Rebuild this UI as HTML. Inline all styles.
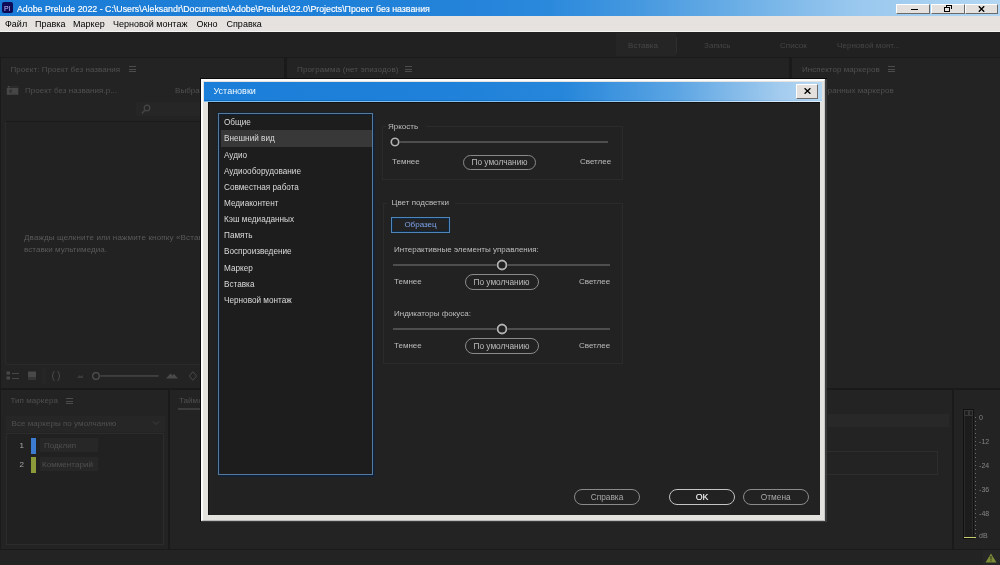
<!DOCTYPE html>
<html><head><meta charset="utf-8">
<style>
*{margin:0;padding:0;box-sizing:border-box}
html,body{width:1000px;height:565px;overflow:hidden;background:#1a1a1a;font-family:"Liberation Sans",sans-serif}
.a{position:absolute}
.t{position:absolute;white-space:nowrap;line-height:1}
#root{position:absolute;left:0;top:0;width:1000px;height:565px;will-change:transform}
#title{left:0;top:0;width:1000px;height:16px;background:linear-gradient(90deg,#1b7dd7 0%,#1e7fd8 30%,#2383d9 45%,#2b89dc 55%,#4a9be0 65%,#70b1e7 75%,#98c7ee 85%,#b3d7f3 100%)}
#menu{left:0;top:16px;width:1000px;height:16px;background:#e5e2df;border-bottom:1.5px solid #f4f4f2}
#menu .t{top:4px;font-size:9px;color:#000}
.wb{position:absolute;top:4px;height:10px;background:#e4e0dd;border-right:1px solid #6a6a6a;border-bottom:1px solid #6a6a6a;border-top:1px solid #fff;border-left:1px solid #fff}
.pn{position:absolute;background:#232323}
.dim{position:absolute;white-space:nowrap;line-height:1;color:#505050;font-size:8px;letter-spacing:0.05px}
.li{position:absolute;left:224px;white-space:nowrap;line-height:1;color:#dadada;font-size:8.2px}
.dt{position:absolute;white-space:nowrap;line-height:1;color:#bdbdbd;font-size:8px}
.pill{position:absolute;border:1.3px solid #8a8a8a;border-radius:8px;height:15.5px}
.pill span{position:absolute;left:0;right:0;top:2.8px;text-align:center;white-space:nowrap;line-height:1;color:#bcbcbc;font-size:8.3px}
.sl{position:absolute;height:1.8px;background:#4e4e4e}
.knob{position:absolute;width:9.4px;height:9.4px;border:2px solid #b2b2b2;border-radius:50%;background:#222;box-shadow:0 0 0 1px #141414}
.gb{position:absolute;border:1px solid #2b2b2b}
.ham{position:absolute;width:7px;height:6px;border-top:1px solid #4c4c4c;border-bottom:1px solid #4c4c4c}
.ham:after{content:"";position:absolute;left:0;right:0;top:1.5px;height:1px;background:#4c4c4c}
</style></head><body><div id="root">
<!-- title bar -->
<div id="title" class="a">
  <div class="a" style="left:2px;top:2px;width:11px;height:11px;background:#0e0a56;border-radius:2px"></div>
  <div class="t" style="left:4px;top:4.5px;font-size:7px;color:#c4bcff">Pl</div>
  <div class="t" style="left:17px;top:4.5px;font-size:8.8px;color:#fff;-webkit-text-stroke:0.15px #fff">Adobe Prelude 2022 - C:\Users\Aleksandr\Documents\Adobe\Prelude\22.0\Projects\Проект без названия</div>
  <div class="wb" style="left:896px;width:34px"></div>
  <div class="wb" style="left:931px;width:34px"></div>
  <div class="wb" style="left:965px;width:33px"></div>
  <div class="a" style="left:911px;top:8.5px;width:7px;height:1.6px;background:#000"></div>
  <svg class="a" style="left:943px;top:3px" width="10" height="10" viewBox="0 0 10 10" shape-rendering="crispEdges"><path d="M3 1.5h5.5v1.5h-5.5zM7.5 3h1v3h-1zM3 3h1v0.5h-1z" fill="#000"/><rect x="1" y="3.5" width="5" height="4.5" fill="#e4e0dd"/><path d="M1 3.5h5.5v1.5h-5.5zM1 5h1v3.5h-1zM5.5 5h1v3.5h-1zM1 7.5h5.5v1h-5.5z" fill="#000"/></svg>
  <svg class="a" style="left:977.5px;top:5.5px" width="7" height="6" viewBox="0 0 7 6"><path d="M0.8 0.3L6.2 5.7M6.2 0.3L0.8 5.7" stroke="#000" stroke-width="1.4"/></svg>
</div>
<div id="menu" class="a">
  <div class="t" style="left:5px">Файл</div>
  <div class="t" style="left:35px">Правка</div>
  <div class="t" style="left:73px">Маркер</div>
  <div class="t" style="left:113px">Черновой монтаж</div>
  <div class="t" style="left:196.5px">Окно</div>
  <div class="t" style="left:226.5px">Справка</div>
</div>
<!-- workspace bar -->
<div class="pn" style="left:0;top:32px;width:1000px;height:25px;background:#212121"></div>
<div class="a" style="left:616px;top:33px;width:60px;height:23px;background:#252525"></div>
<div class="dim" style="left:628px;top:42px;color:#464646">Вставка</div>
<div class="a" style="left:676px;top:37px;width:1px;height:16px;background:#2e2e2e"></div>
<div class="dim" style="left:704px;top:42px;color:#464646">Запись</div>
<div class="dim" style="left:780px;top:42px;color:#464646">Список</div>
<div class="dim" style="left:837px;top:42px;color:#464646">Черновой монт...</div>

<!-- panels -->
<div class="pn" style="left:1px;top:58px;width:283px;height:330px"></div>
<div class="pn" style="left:287px;top:58px;width:502px;height:330px"></div>
<div class="pn" style="left:792px;top:58px;width:208px;height:330px"></div>
<div class="pn" style="left:1px;top:390px;width:166.5px;height:159px"></div>
<div class="pn" style="left:170px;top:390px;width:782px;height:159px"></div>
<div class="pn" style="left:953.5px;top:390px;width:46.5px;height:159px"></div>
<div class="pn" style="left:0;top:550px;width:1000px;height:15px;background:#232323"></div>

<!-- left top panel content -->
<div class="dim" style="left:10.5px;top:66px">Проект: Проект без названия</div>
<div class="ham" style="left:129px;top:66px"></div>
<svg class="a" style="left:6px;top:85px" width="14" height="11" viewBox="0 0 14 11"><path d="M1.8 1h2v1.5h-2z" fill="#4a4a4a"/><path d="M5 1.3h7.5v1h-7.5z" fill="#333"/><rect x="0.8" y="2.9" width="11.5" height="6.9" fill="#474747"/><path d="M4 4.5v3.5M4 4.8q2 0 2 1.2q0 1.2 -2 1.2" fill="none" stroke="#2e2e2e" stroke-width="1"/><path d="M4.5 9h6" stroke="#3a3a3a" stroke-width="0.8"/></svg>
<div class="dim" style="left:25px;top:87px">Проект без названия.p...</div>
<div class="dim" style="left:175px;top:87px">Выбрано</div>
<div class="a" style="left:136px;top:102px;width:70px;height:14px;background:#262626;border-radius:2px"></div>
<svg class="a" style="left:140px;top:103px" width="12" height="12" viewBox="0 0 12 12"><circle cx="7" cy="5" r="2.8" fill="none" stroke="#474747" stroke-width="1.2"/><path d="M5 7L2 10.5" stroke="#474747" stroke-width="1.3"/></svg>
<div class="a" style="left:5px;top:121px;width:279px;height:243px;background:#222;border-top:1px solid #1a1a1a;border-left:1px solid #2a2a2a"></div>
<div class="dim" style="left:24px;top:234px;letter-spacing:0.15px;color:#5a5a5a">Дважды щелкните или нажмите кнопку «Вставка»</div>
<div class="dim" style="left:24px;top:245.5px;color:#5a5a5a">вставки мультимедиа.</div>
<!-- toolbar -->
<div class="a" style="left:6px;top:364px;width:278px;height:1px;background:#2a2a2a"></div>
<svg class="a" style="left:0;top:365px" width="284" height="22" viewBox="0 0 284 22">
 <g fill="#484848">
  <rect x="6.5" y="6.5" width="3.5" height="3"/><rect x="6.5" y="11.5" width="3.5" height="3"/>
  <rect x="12" y="8" width="7" height="1"/><rect x="12" y="13" width="7" height="1"/>
  <rect x="28" y="6.5" width="8" height="6"/><rect x="28" y="13.5" width="8" height="1"/>
 </g>
 <rect x="42" y="3" width="4" height="16" fill="#262626"/>
 <g fill="none" stroke="#4a4a4a" stroke-width="1">
  <path d="M54.5 6.5q-1.5 0 -1.5 2v1.5l-1 1l1 1v1.5q0 2 1.5 2"/>
  <path d="M57.5 6.5q1.5 0 1.5 2v1.5l1 1l-1 1v1.5q0 2 -1.5 2"/>
  <circle cx="96" cy="11" r="3.3" stroke="#505050" stroke-width="1.3"/>
  <path d="M189.3 11l3.6-4.3l3.6 4.3l-3.6 4.3z"/>
 </g>
 <rect x="100.4" y="10.2" width="58.2" height="1.5" fill="#474747"/>
 <path d="M77 13h6v-3l-2 1.5l-1.5-1.5l-2.5 3z" fill="#3c3c3c"/>
 <path d="M166 13.5l4.5-5l2 2l1.5-1.5l4 4.5z" fill="#4a4a4a"/>
</svg>

<!-- middle top -->
<div class="dim" style="left:297px;top:66px;letter-spacing:0.15px">Программа (нет эпизодов)</div>
<div class="ham" style="left:405px;top:66px"></div>
<!-- right top -->
<div class="dim" style="left:802px;top:66px">Инспектор маркеров</div>
<div class="ham" style="left:888px;top:66px"></div>
<div class="dim" style="left:813px;top:87px">выбранных маркеров</div>

<!-- bottom left -->
<div class="dim" style="left:10.5px;top:397px">Тип маркера</div>
<div class="ham" style="left:65.5px;top:398px"></div>
<div class="a" style="left:5.5px;top:415.5px;width:159px;height:16.5px;background:#262626"></div>
<svg class="a" style="left:152px;top:420px" width="8" height="6" viewBox="0 0 8 6"><path d="M1 1.5l3 3l3-3" fill="none" stroke="#3e3e3e" stroke-width="1"/></svg>
<div class="dim" style="left:11.5px;top:420px">Все маркеры по умолчанию</div>
<div class="a" style="left:6px;top:432.5px;width:157.5px;height:112px;border:1px solid #2c2c2c;background:#212121"></div>
<div class="dim" style="left:19.5px;top:441.5px;color:#a8a8a8">1</div>
<div class="a" style="left:30.5px;top:437.5px;width:5px;height:16px;background:#3b7bd0"></div>
<div class="a" style="left:40px;top:438px;width:58px;height:14px;background:#272727"></div>
<div class="dim" style="left:44px;top:442px">Подклип</div>
<div class="dim" style="left:19.5px;top:460.5px;color:#a8a8a8">2</div>
<div class="a" style="left:30.5px;top:457px;width:5px;height:16px;background:#8c9a3a"></div>
<div class="a" style="left:40px;top:457px;width:58px;height:14px;background:#272727"></div>
<div class="dim" style="left:42px;top:461px">Комментарий</div>
<!-- bottom middle -->
<div class="dim" style="left:179px;top:397px">Таймлайн</div>
<div class="a" style="left:178px;top:408px;width:40px;height:2px;background:#3c3c3c"></div>
<div class="a" style="left:828px;top:414px;width:121px;height:13px;background:#282828"></div>
<div class="a" style="left:760px;top:451px;width:178px;height:24px;border:1px solid #2d2d2d"></div>
<!-- meter -->
<div class="a" style="left:963px;top:409px;width:11px;height:130px;border:1px solid #111;background:#1c1c1c;box-shadow:inset 1px 0 0 #2a2a2a,inset -1px 0 0 #2a2a2a"></div>
<div class="a" style="left:964px;top:410px;width:4.5px;height:6px;border:1px solid #383838;background:#1e1e1e"></div>
<div class="a" style="left:968.5px;top:410px;width:4.5px;height:6px;border:1px solid #383838;background:#1e1e1e"></div>
<div class="a" style="left:964px;top:536.5px;width:12px;height:1.5px;background:#c8cf6a"></div>
<div class="a" style="left:975px;top:417px;width:1.2px;height:120px;background:repeating-linear-gradient(180deg,#6a6a6a 0 1px,transparent 1px 4px)"></div>
<div class="dim" style="left:979px;top:413.5px;font-size:7px;color:#858585">0</div>
<div class="dim" style="left:979px;top:437.5px;font-size:7px;color:#858585">-12</div>
<div class="dim" style="left:979px;top:461.5px;font-size:7px;color:#858585">-24</div>
<div class="dim" style="left:979px;top:485.5px;font-size:7px;color:#858585">-36</div>
<div class="dim" style="left:979px;top:509.5px;font-size:7px;color:#858585">-48</div>
<div class="dim" style="left:979px;top:531.5px;font-size:7px;color:#858585">dB</div>
<!-- status -->
<div class="a" style="left:983px;top:550px;width:17px;height:15px;background:#262626"></div>
<svg class="a" style="left:985px;top:553px" width="12" height="10" viewBox="0 0 12 10"><path d="M6 0.5L11.5 9.5H0.5z" fill="#7d8a36"/><path d="M6 3v3.5" stroke="#2a2a20" stroke-width="1"/><rect x="5.5" y="7.3" width="1" height="1" fill="#2a2a20"/></svg>

<!-- dialog -->
<div class="a" style="left:200px;top:78px;width:627px;height:444px;background:linear-gradient(180deg,#0a0a0a,#0a0a0a)"></div>
<div class="a" style="left:201px;top:79px;width:625.5px;height:442.5px;background:#3a3a3a"></div>
<div class="a" style="left:201px;top:79px;width:624px;height:441.5px;background:#e4e2df;border-top:2.5px solid #fbfbfb;border-left:2.5px solid #fbfbfb;border-right:1px solid #c8c8c8;border-bottom:1px solid #b8b8b8"></div>
<div class="a" style="left:204px;top:82px;width:618px;height:18px;background:linear-gradient(90deg,#1b7ed8 0%,#1f81d9 40%,#2686da 58%,#5aa4e3 76%,#a2cbee 93%,#b8d9f3 100%)"></div>
<div class="a" style="left:204px;top:100px;width:618px;height:1px;background:linear-gradient(90deg,#0f6cc0 0%,#1474c8 58%,#4a92d0 76%,#90bde6 93%,#a8d0ee 100%)"></div>
<div class="a" style="left:204px;top:101px;width:618px;height:1px;background:linear-gradient(90deg,#7fbdee 0%,#86c2f0 58%,#a8d2f4 76%,#d6eafa 93%,#e2f0fb 100%)"></div>
<div class="t" style="left:213.5px;top:87px;font-size:9px;color:#f2faff">Установки</div>
<div class="wb" style="left:796px;top:84px;width:22px;height:15px"></div>
<svg class="a" style="left:804px;top:88px" width="7" height="6" viewBox="0 0 7 6"><path d="M0.6 0.3L6.4 5.7M6.4 0.3L0.6 5.7" stroke="#000" stroke-width="1.4"/></svg>
<div class="a" style="left:207.5px;top:102px;width:612.5px;height:412.5px;background:#222;border-top:1px solid #121212;border-left:1px solid #121212"></div>

<!-- list -->
<div class="a" style="left:218.3px;top:113px;width:155px;height:362px;border:1.5px solid #5a7a9a;background:#1d1d1d;box-shadow:1.5px 1.5px 0 #0a2240,-0.6px -0.6px 0 #10243a,inset 1px 1px 0 #0b2038"></div>
<div class="a" style="left:220.5px;top:130px;width:151px;height:16.5px;background:#383838"></div>
<div class="li" style="top:119px">Общие</div>
<div class="li" style="top:135px">Внешний вид</div>
<div class="li" style="top:151.5px">Аудио</div>
<div class="li" style="top:167.5px">Аудиооборудование</div>
<div class="li" style="top:183.5px">Совместная работа</div>
<div class="li" style="top:199.5px">Медиаконтент</div>
<div class="li" style="top:216px">Кэш медиаданных</div>
<div class="li" style="top:232px">Память</div>
<div class="li" style="top:248px">Воспроизведение</div>
<div class="li" style="top:264.5px">Маркер</div>
<div class="li" style="top:280.5px">Вставка</div>
<div class="li" style="top:296.5px">Черновой монтаж</div>

<!-- group 1 -->
<div class="gb" style="left:382px;top:126px;width:241px;height:54px"></div>
<div class="a" style="left:386px;top:122px;width:40px;height:9px;background:#222"></div>
<div class="dt" style="left:388px;top:123px">Яркость</div>
<div class="sl" style="left:396px;top:141px;width:212px"></div>
<svg class="a" style="left:385.3px;top:132px" width="20" height="20" viewBox="0 0 20 20"><circle cx="10" cy="10" r="5.2" fill="#161616"/><circle cx="10" cy="10" r="3.75" fill="#222" stroke="#b2b2b2" stroke-width="1.7"/></svg>
<div class="dt" style="left:392px;top:158px">Темнее</div>
<div class="pill" style="left:463px;top:154.5px;width:73px"><span>По умолчанию</span></div>
<div class="dt" style="left:580px;top:158px">Светлее</div>

<!-- group 2 -->
<div class="gb" style="left:383px;top:203px;width:240px;height:161px"></div>
<div class="a" style="left:387px;top:198px;width:68px;height:9px;background:#222"></div>
<div class="dt" style="left:391.5px;top:199px">Цвет подсветки</div>
<div class="a" style="left:391px;top:217px;width:59px;height:15.5px;border:1px solid #4f86ba;box-shadow:inset 1px 1px 0 #0c2a48,inset -1px -1px 0 #0c2a48"></div>
<div class="t" style="left:391px;top:221px;width:59px;text-align:center;font-size:8px;color:#7aa2ea">Образец</div>
<div class="dt" style="left:394px;top:246px">Интерактивные элементы управления:</div>
<div class="sl" style="left:393px;top:264px;width:217px"></div>
<svg class="a" style="left:491.8px;top:255.1px" width="20" height="20" viewBox="0 0 20 20"><circle cx="10" cy="10" r="6" fill="#161616"/><circle cx="10" cy="10" r="4.45" fill="#222" stroke="#b2b2b2" stroke-width="1.9"/></svg>
<div class="dt" style="left:394px;top:278px">Темнее</div>
<div class="pill" style="left:464.5px;top:274px;width:74px"><span>По умолчанию</span></div>
<div class="dt" style="left:579px;top:278px">Светлее</div>
<div class="dt" style="left:394px;top:310px">Индикаторы фокуса:</div>
<div class="sl" style="left:393px;top:328.1px;width:217px"></div>
<svg class="a" style="left:491.7px;top:318.9px" width="20" height="20" viewBox="0 0 20 20"><circle cx="10" cy="10" r="6" fill="#161616"/><circle cx="10" cy="10" r="4.45" fill="#222" stroke="#b2b2b2" stroke-width="1.9"/></svg>
<div class="dt" style="left:394px;top:342px">Темнее</div>
<div class="pill" style="left:464.5px;top:338px;width:74px"><span>По умолчанию</span></div>
<div class="dt" style="left:579px;top:342px">Светлее</div>

<!-- buttons -->
<div class="pill" style="left:574px;top:489px;width:66px"><span style="color:#a8a8a8">Справка</span></div>
<div class="pill" style="left:669px;top:489px;width:66px;border:1.5px solid #c4c4c4"><span style="color:#f8f8f8;font-size:8.8px;top:2.7px;-webkit-text-stroke:0.1px #f8f8f8">OK</span></div>
<div class="pill" style="left:742.5px;top:489px;width:66.5px"><span style="color:#a8a8a8">Отмена</span></div>

</div></body></html>
